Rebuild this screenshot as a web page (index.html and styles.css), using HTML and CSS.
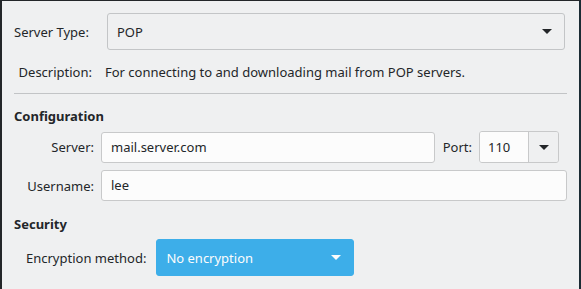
FILE: index.html
```html
<!DOCTYPE html>
<html lang="en">
  <head>
    <meta charset="UTF-8" />
    <title>Account Settings</title>
    <link rel="stylesheet" href="styles.css">
  </head>
  <body>
    <div class="window">
      <div class="type-grid">
        <span class="label">Server Type:</span>
        <div class="combo">
          <span>POP</span>
          <span class="arrow"></span>
        </div>
        <span class="label desc-label">Description:</span>
        <span class="desc">For connecting to and downloading mail from POP servers.</span>
      </div>
      <div class="separator"></div>

      <h3 class="section">Configuration</h3>
      <div class="config-grid">
        <span class="label">Server:</span>
        <div class="server-row">
          <div class="input server">mail.server.com</div>
          <span class="port-label">Port:</span>
          <div class="spin">
            <span class="spin-value">110</span>
            <span class="spin-btn"><span class="arrow"></span></span>
          </div>
        </div>
        <span class="label">Username:</span>
        <div class="input">lee</div>
      </div>

      <h3 class="section security">Security</h3>
      <div class="enc-row">
        <span class="label">Encryption method:</span>
        <div class="combo blue">
          <span>No encryption</span>
          <span class="arrow"></span>
        </div>
      </div>
    </div>
  </body>
</html>
```

FILE: styles.css
```css
body,
h3 {
  margin: 0;
  padding: 0;
}
body {
  font-family: "Noto Sans", sans-serif;
  font-size: 13px;
  color: #232629;
  background: #232629;
}
.window {
  box-sizing: border-box;
  width: 581px;
  height: 289px;
  border-top: 1px solid #232629;
  border-left: 2px solid #232629;
  border-right: 2px solid #1b2b34;
  background: #eff0f1;
  padding: 12px 12px 0 12px;
  overflow: hidden;
}
.label {
  line-height: 18px;
}
.type-grid {
  display: grid;
  grid-template-columns: 78px 1fr;
  column-gap: 13px;
  row-gap: 13px;
  align-items: center;
}
.desc-label {
  justify-self: end;
}
.combo {
  display: flex;
  align-items: center;
  justify-content: space-between;
  height: 37px;
  box-sizing: border-box;
  border: 1px solid #c3c5c7;
  border-radius: 3px;
  padding: 0 12px 0 9px;
  margin: 0 2px 0 2px;
  background: #eff0f1;
}
.arrow {
  width: 0;
  height: 0;
  border-left: 5px solid transparent;
  border-right: 5px solid transparent;
  border-top: 5px solid #232629;
}
.separator {
  height: 1px;
  background: #c2c4c6;
  margin-top: 12px;
}
.section {
  font-size: 13px;
  font-weight: bold;
  line-height: 18px;
  margin-top: 13px;
}
.config-grid {
  display: grid;
  grid-template-columns: 80px 1fr;
  column-gap: 7px;
  row-gap: 7px;
  align-items: center;
  margin-top: 6px;
}
.config-grid .label {
  justify-self: end;
}
.server-row {
  display: flex;
  align-items: center;
}
.input {
  box-sizing: border-box;
  height: 31px;
  line-height: 29px;
  border: 1px solid #c8c9ca;
  border-radius: 3px;
  background: #fcfcfc;
  padding: 0 9px;
}
.server {
  flex: 1;
}
.port-label {
  margin: 0 7px 0 8px;
}
.spin {
  display: flex;
  box-sizing: border-box;
  width: 80px;
  height: 32px;
  border: 1px solid #c8c9ca;
  border-radius: 3px;
  margin-right: 8px;
  overflow: hidden;
}
.spin-value {
  width: 49px;
  background: #fcfcfc;
  line-height: 30px;
  padding-left: 8px;
  box-sizing: border-box;
  border-right: 1px solid #c8c9ca;
}
.spin-btn {
  flex: 1;
  display: flex;
  align-items: center;
  justify-content: center;
  background: #eff0f1;
}
.security {
  margin-top: 14px;
}
.enc-row {
  display: flex;
  align-items: center;
  margin-top: 6px;
  padding-left: 12px;
}
.enc-row .combo {
  width: 198px;
  margin: 0 0 0 10px;
}
.combo.blue {
  background: #3daee9;
  border-color: #3daee9;
  color: #fcfcfc;
}
.combo.blue .arrow {
  border-top-color: #fcfcfc;
}
```
